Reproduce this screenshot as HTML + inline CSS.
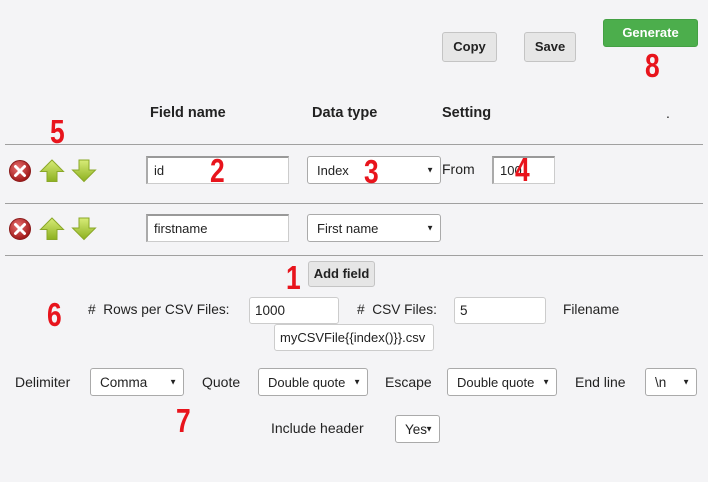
<!DOCTYPE html>
<html><head><style>
body{margin:0;width:708px;height:482px;background:#f4f4f6;font-family:"Liberation Sans",sans-serif;font-size:14px;color:#222;position:relative;overflow:hidden}
.a{position:absolute}
.btn{position:absolute;background:#e6e6e6;border:1px solid #c4c4c4;border-radius:3px;font-weight:bold;font-size:13px;text-align:center;box-sizing:border-box}
.in{position:absolute;background:#fff;border:1px solid #ccc;border-top:2px solid #999;border-left:2px solid #aaa;box-sizing:border-box;padding-left:6px;font-size:13px}
.in2{position:absolute;background:#fff;border:1px solid #ccc;border-radius:3px;box-sizing:border-box;padding-left:5px;font-size:13.5px;white-space:nowrap;overflow:hidden}
.sel{position:absolute;background:#fff;border:1px solid #aaa;border-radius:3px;box-sizing:border-box;padding-left:9px;font-size:13.5px}
.sel:after{content:"▼";position:absolute;right:6px;font-size:8px;top:50%;transform:translateY(-50%)}
.n{position:absolute;color:#e8141c;font-weight:bold;font-size:33px;line-height:1;font-family:"Liberation Sans Narrow","Liberation Sans",sans-serif;transform:scaleX(.8);transform-origin:left top}
.h{position:absolute;font-weight:bold;font-size:14.5px}
.hr{position:absolute;left:5px;width:698px;height:1px;background:#a0a0a0}
</style></head><body>
<div class="btn" style="left:442px;top:32px;width:55px;height:30px;line-height:28px">Copy</div>
<div class="btn" style="left:524px;top:32px;width:52px;height:30px;line-height:28px">Save</div>
<div class="btn" style="left:603px;top:19px;width:95px;height:28px;line-height:26px;background:#4cae4c;border-color:#44a044;color:#fff">Generate</div>
<div class="n" style="left:645px;top:49px">8</div>

<div class="h" style="left:150px;top:105px">Field name</div>
<div class="h" style="left:312px;top:105px">Data type</div>
<div class="h" style="left:442px;top:105px">Setting</div>
<div class="a" style="left:666px;top:105px">.</div>
<div class="n" style="left:50px;top:115px">5</div>

<div class="hr" style="top:144px"></div>
<div class="hr" style="top:203px"></div>
<div class="hr" style="top:255px"></div>

<svg class="a" style="left:8px;top:158px" width="92" height="90">
<defs>
<radialGradient id="r" cx="40%" cy="35%" r="65%"><stop offset="0" stop-color="#e87070"/><stop offset="1" stop-color="#a01818"/></radialGradient>
<linearGradient id="g" x1="0" y1="0" x2="0" y2="1"><stop offset="0" stop-color="#d8ec78"/><stop offset="1" stop-color="#8cb020"/></linearGradient>
</defs>
<g id="row">
<circle cx="12" cy="13" r="10.5" fill="url(#r)" stroke="#8a1a1a"/>
<path d="M7.5 8.5l9 9M16.5 8.5l-9 9" stroke="#fff" stroke-width="3" stroke-linecap="round"/>
<path d="M44 2l11.5 11.5h-6.5v10h-10v-10h-6.5z" fill="url(#g)" stroke="#8aa828"/>
<path d="M71 2h10v10h6.5l-11.5 11.5l-11.5-11.5h6.5z" fill="url(#g)" stroke="#8aa828"/>
</g>
<use href="#row" y="58"/>
</svg>

<div class="in" style="left:146px;top:156px;width:143px;height:28px;line-height:25px">id</div>
<div class="n" style="left:210px;top:154px">2</div>
<div class="sel" style="left:307px;top:156px;width:134px;height:28px;line-height:27px;font-size:13px">Index</div>
<div class="n" style="left:364px;top:155px">3</div>
<div class="a" style="left:442px;top:161px">From</div>
<div class="in" style="left:492px;top:156px;width:63px;height:28px;line-height:25px">100</div>
<div class="n" style="left:515px;top:153px">4</div>

<div class="in" style="left:146px;top:214px;width:143px;height:28px;line-height:25px">firstname</div>
<div class="sel" style="left:307px;top:214px;width:134px;height:28px;line-height:27px;font-size:13px">First name</div>

<div class="n" style="left:286px;top:261px">1</div>
<div class="btn" style="left:308px;top:261px;width:67px;height:26px;line-height:24px;font-size:13px">Add field</div>

<div class="n" style="left:47px;top:298px">6</div>
<div class="a" style="left:88px;top:302px;font-size:13.7px">#&nbsp; Rows per CSV Files:</div>
<div class="in2" style="left:249px;top:297px;width:90px;height:27px;line-height:25px">1000</div>
<div class="a" style="left:357px;top:302px;font-size:13.7px">#&nbsp; CSV Files:</div>
<div class="in2" style="left:454px;top:297px;width:92px;height:27px;line-height:25px">5</div>
<div class="a" style="left:563px;top:302px;font-size:13.7px">Filename</div>
<div class="in2" style="left:274px;top:324px;width:160px;height:27px;line-height:25px;font-size:13px">myCSVFile{{index()}}.csv</div>

<div class="a" style="left:15px;top:374px">Delimiter</div>
<div class="sel" style="left:90px;top:368px;width:94px;height:28px;line-height:27px">Comma</div>
<div class="a" style="left:202px;top:374px">Quote</div>
<div class="sel" style="left:258px;top:368px;width:110px;height:28px;line-height:27px;font-size:13px">Double quote</div>
<div class="a" style="left:385px;top:374px">Escape</div>
<div class="sel" style="left:447px;top:368px;width:110px;height:28px;line-height:27px;font-size:13px">Double quote</div>
<div class="a" style="left:575px;top:374px">End line</div>
<div class="sel" style="left:645px;top:368px;width:52px;height:28px;line-height:27px">\n</div>

<div class="n" style="left:176px;top:404px">7</div>
<div class="a" style="left:271px;top:420px">Include header</div>
<div class="sel" style="left:395px;top:415px;width:45px;height:28px;line-height:27px">Yes</div>
</body></html>
